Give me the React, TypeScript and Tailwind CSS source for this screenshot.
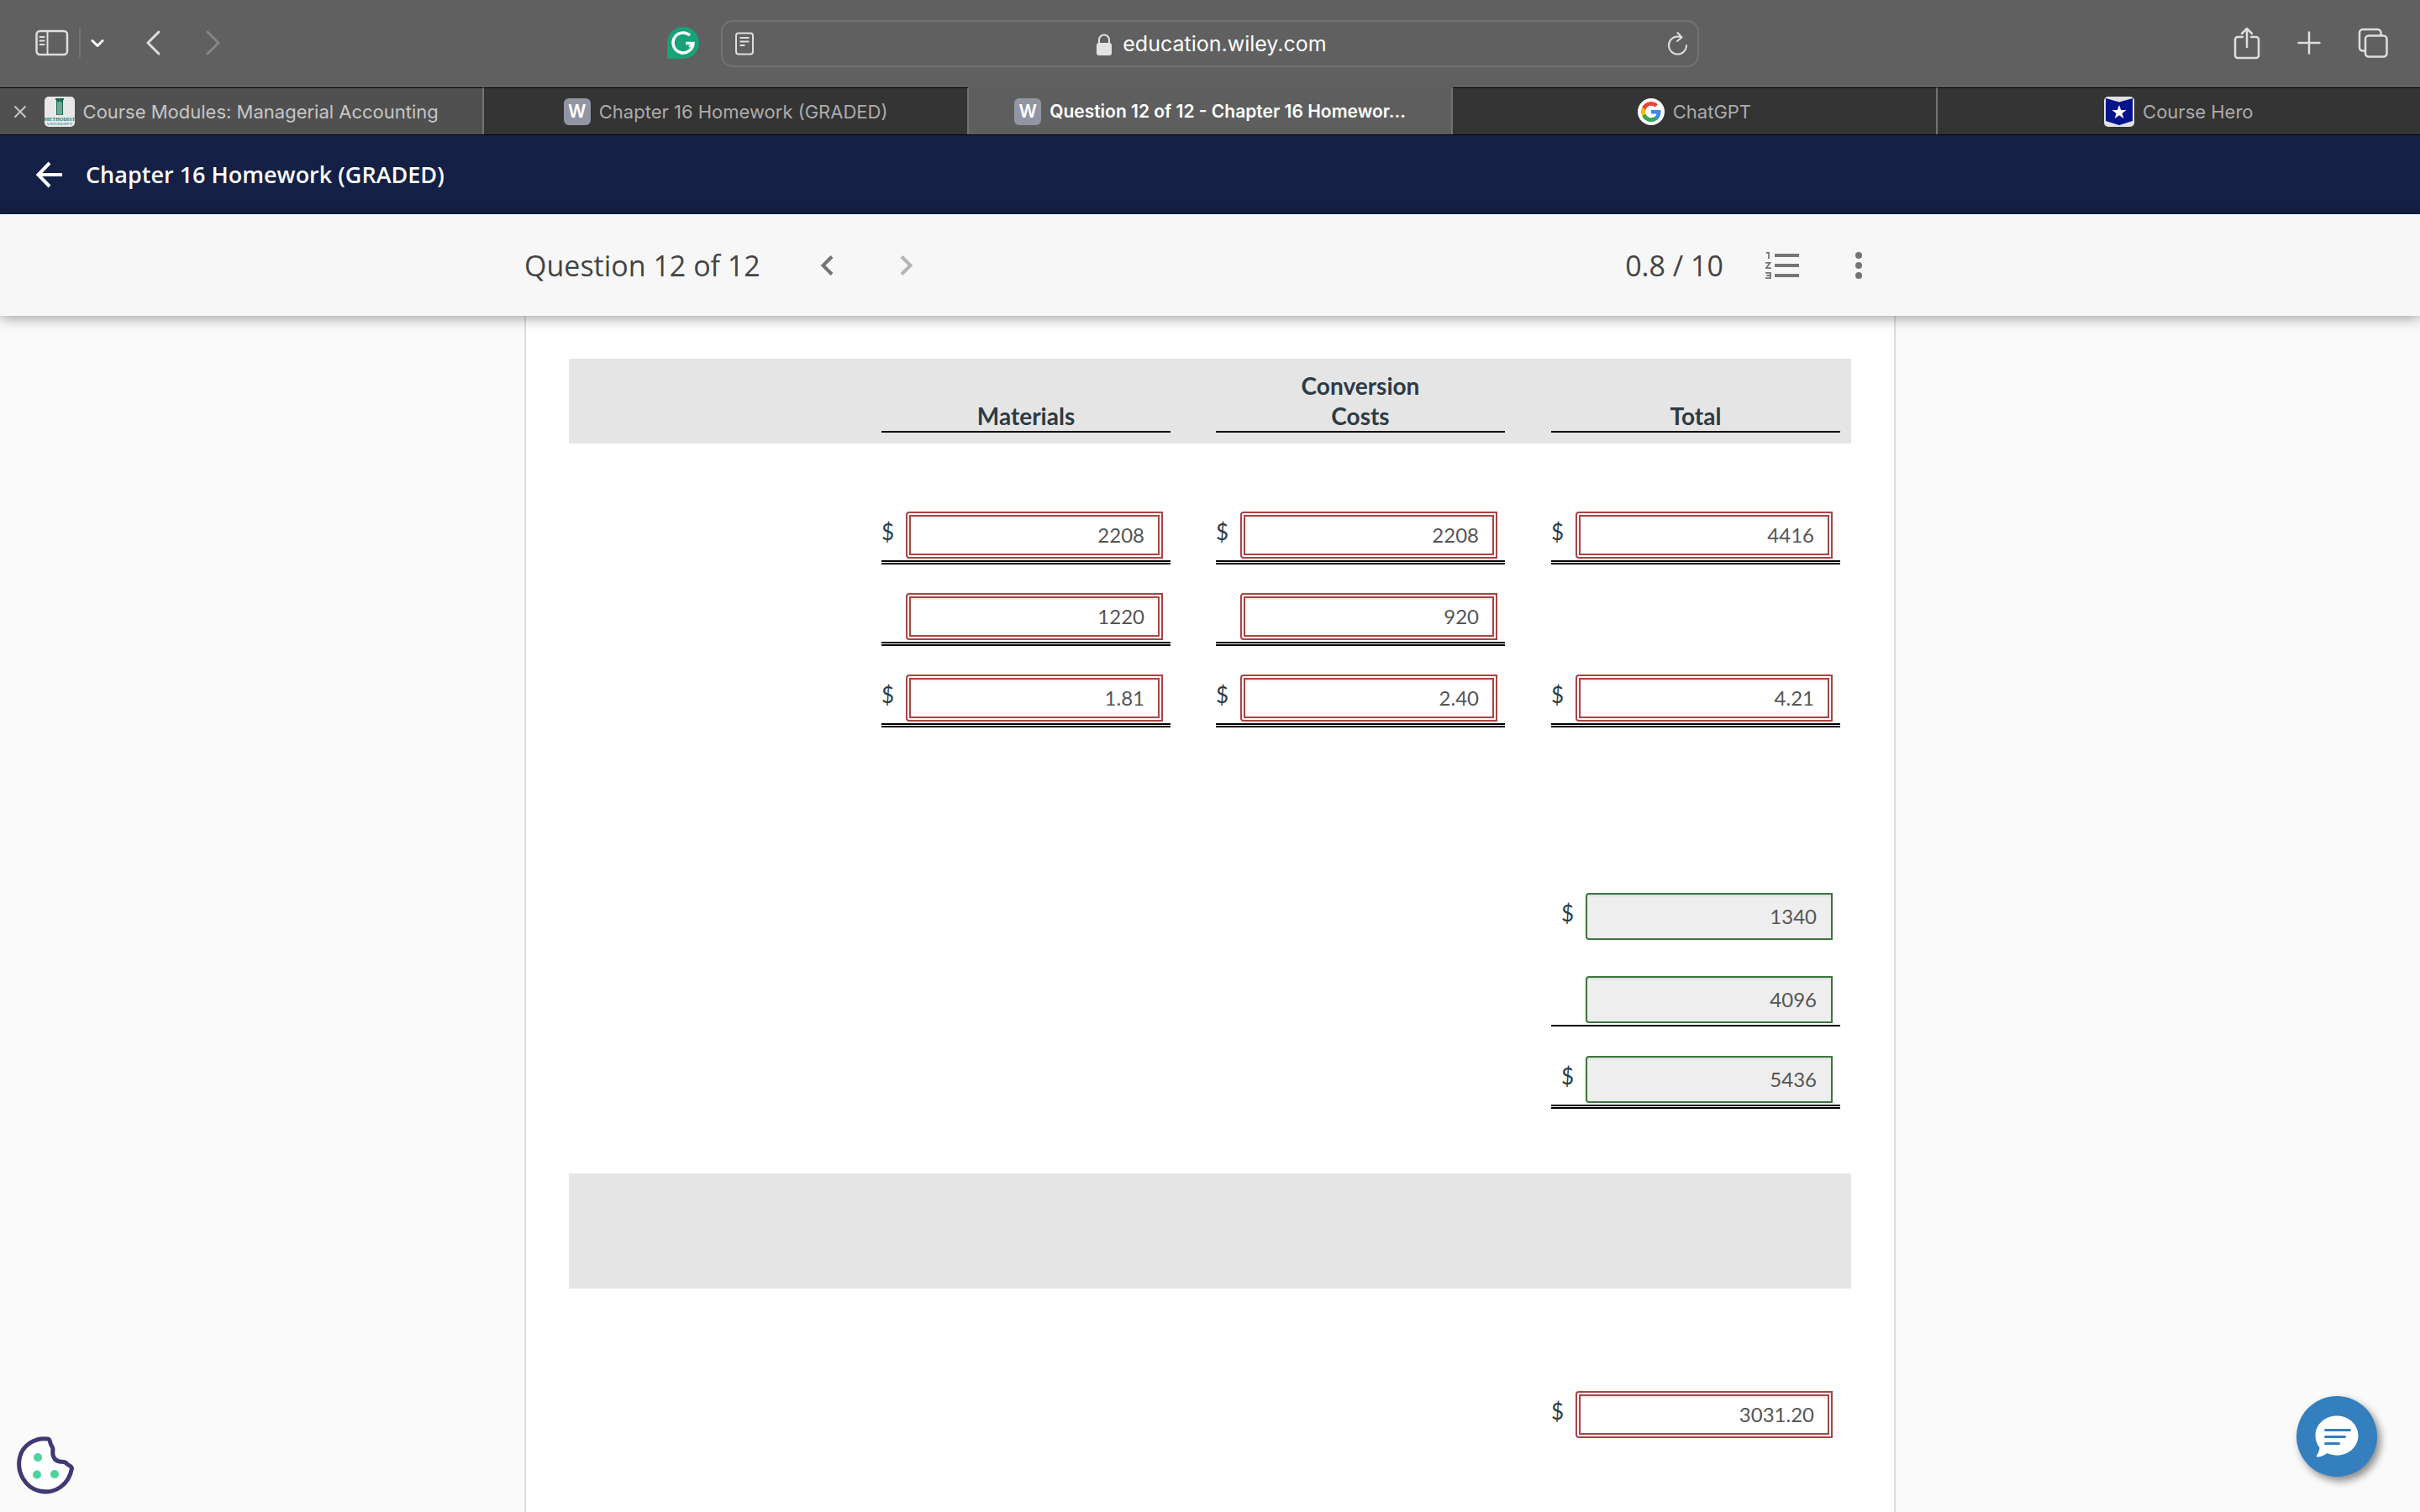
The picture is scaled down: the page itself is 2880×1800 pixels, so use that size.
import type { ReactNode } from "react";

type TabProps = {
  title: string;
  icon: ReactNode;
  active?: boolean;
  hovered?: boolean;
  last?: boolean;
};

type AnswerProps = {
  label: string;
  value: string;
  correct?: boolean;
  dollar?: boolean;
  line?: "single" | "double" | "none";
};

function WileyIcon() {
  return (
    <span className="flex size-8 items-center justify-center rounded-md bg-[#9295a3] text-[21px] font-semibold text-white">
      W
    </span>
  );
}

function MethodistIcon() {
  return (
    <svg className="size-9" viewBox="0 0 36 36">
      <rect width="36" height="36" rx="5" fill="#e8e8e8" />
      <path d="M13 2h10v2h-1v18h-8V4h-1z" fill="#17694f" />
      <path d="M16 6.500v15M18 5.500v16M20 6.500v15" stroke="#cfe0d9" strokeWidth="1" />
      <text x="18" y="29" textAnchor="middle" fontFamily="Liberation Serif, serif" fontWeight="700" fontSize="6" fill="#2b7a60">
        METHODIST
      </text>
      <text x="18" y="34" textAnchor="middle" fontFamily="Liberation Serif, serif" fontSize="5" fill="#2b7a60">
        UNIVERSITY
      </text>
    </svg>
  );
}

function GoogleIcon() {
  return (
    <svg className="size-8" viewBox="0 0 32 32">
      <circle cx="16" cy="16" r="16" fill="#fff" />
      <g transform="translate(4 4)">
        <path fill="#4285f4" d="M23.500 12.300c0-.8-.1-1.600-.2-2.300H12v4.500h6.500a5.500 5.500 0 0 1-2.400 3.600v3h3.900c2.200-2.100 3.500-5.200 3.500-8.800z" />
        <path fill="#34a853" d="M12 24c3.200 0 6-1.100 8-2.900l-3.900-3c-1.100.7-2.500 1.200-4.100 1.200-3.100 0-5.800-2.100-6.700-5H1.300v3.100A12 12 0 0 0 12 24z" />
        <path fill="#fbbc05" d="M5.300 14.300a7.200 7.200 0 0 1 0-4.600V6.600h-4a12 12 0 0 0 0 10.800z" />
        <path fill="#ea4335" d="M12 4.800c1.800 0 3.300.6 4.600 1.800L20 3.200A12 12 0 0 0 1.300 6.600l4 3.100c.9-2.800 3.600-4.900 6.700-4.900z" />
      </g>
    </svg>
  );
}

function CourseHeroIcon() {
  return (
    <svg className="size-9" viewBox="0 0 36 36">
      <rect width="36" height="36" rx="5" fill="#e2e2e2" />
      <path d="M2 2l16 4.500L34 2v27l-16 5L2 29z" fill="#03148c" />
      <path d="M18 10l2.200 6h6.300l-5 3.900 1.900 6.100-5.400-3.700-5.400 3.700 1.900-6.100-5-3.900h6.300z" fill="#fff" />
    </svg>
  );
}

function Tab({ title, icon, active, hovered, last }: TabProps) {
  const bg = active
    ? "border-t-[#5e5e5e] bg-[#5e5e5e] text-white"
    : hovered
      ? "border-t-black bg-[#505050] text-[#c6c6c6]"
      : "border-t-black bg-[#343434] text-[#acacac]";

  return (
    <div className={`relative flex min-w-0 flex-1 border-t ${bg} ${last ? "" : "border-r-2 border-r-[#727272]"}`}>
      {hovered && (
        <button type="button" aria-label="Close tab" className="absolute inset-y-0 left-4">
          <svg className="size-4" viewBox="0 0 16 16" fill="none" stroke="#c6c6c6" strokeWidth="2" strokeLinecap="round">
            <path d="M2 2l12 12M14 2L2 14" />
          </svg>
        </button>
      )}
      <a href="#" className="flex min-w-0 flex-1 items-center justify-center gap-[10px] pt-px">
        {icon}
        <span className={`truncate ${active ? "text-[21px] font-semibold" : "text-[22px]"}`}>{title}</span>
      </a>
    </div>
  );
}

function Toolbar() {
  return (
    <div className="grid h-[104px] grid-cols-[1fr_minmax(0,1164px)_1fr] items-center bg-[#606060]">
      <div className="flex items-center pr-[26px] pb-[2px] pl-[42px]">
        <button type="button" aria-label="Show sidebar">
          <svg className="h-8 w-10" viewBox="0 0 40 32" fill="none" stroke="#dedede" strokeWidth="2.500">
            <rect x="1.500" y="2" width="36.500" height="28" rx="4" />
            <path d="M14.500 2v28" strokeWidth="2" />
            <path d="M5.500 9h5M5.500 13.500h5M5.500 18h5" strokeWidth="2" strokeLinecap="round" />
          </svg>
        </button>
        <span className="ml-3 h-9 w-[2px] bg-[#727272]" />
        <button type="button" aria-label="Tab groups" className="ml-3">
          <svg className="size-4" viewBox="0 0 16 16" fill="none" stroke="#fff" strokeWidth="3" strokeLinecap="round" strokeLinejoin="round">
            <path d="M2 5.500l6 6 6-6" />
          </svg>
        </button>
        <button type="button" aria-label="Back" className="ml-12">
          <svg className="h-8 w-5" viewBox="0 0 20 32" fill="none" stroke="#dedede" strokeWidth="3" strokeLinecap="round" strokeLinejoin="round">
            <path d="M17 3L4 16l13 13" />
          </svg>
        </button>
        <button type="button" aria-label="Forward" className="ml-[52px]">
          <svg className="h-8 w-5" viewBox="0 0 20 32" fill="none" stroke="#868686" strokeWidth="3" strokeLinecap="round" strokeLinejoin="round">
            <path d="M3 3l13 13L3 29" />
          </svg>
        </button>
        <button type="button" aria-label="Grammarly" className="ml-auto">
          <svg className="size-[38px]" viewBox="0 0 38 38" fill="none">
            <path d="M19 0a19 19 0 1 1 0 38H0V19A19 19 0 0 1 19 0z" fill="#15a377" />
            <path d="M27 10A12 12 0 1 0 31 19.500h-9" stroke="#fff" strokeWidth="3.500" />
            <path d="M26 24l5-4.500" stroke="#fff" strokeWidth="2" />
          </svg>
        </button>
      </div>

      <div className="flex h-14 items-center justify-between rounded-[14px] border-2 border-[#727272] pr-[11px] pl-[14px]">
        <button type="button" aria-label="Reader">
          <svg className="h-7 w-6" viewBox="0 0 24 28" fill="none" stroke="#dedede" strokeWidth="2">
            <rect x="2" y="1.500" width="20" height="25" rx="3" />
            <path d="M6.500 7h11M6.500 11.500h11M6.500 16h6" />
          </svg>
        </button>
        <div className="flex items-center gap-3 pt-[2px]">
          <svg className="h-[26px] w-5" viewBox="0 0 20 26" fill="none">
            <rect x="1" y="11" width="18" height="15" rx="3" fill="#e3e3e3" />
            <path d="M4 12V7.500a6 6 0 0 1 12 0V12" stroke="#e3e3e3" strokeWidth="2" />
          </svg>
          <input
            aria-label="Address"
            className="field-sizing-content bg-transparent text-[25px] text-white outline-none"
            defaultValue="education.wiley.com"
          />
        </div>
        <button type="button" aria-label="Reload">
          <svg className="h-7 w-6" viewBox="0 0 24 28" fill="none" stroke="#dedede" strokeWidth="2" strokeLinecap="round" strokeLinejoin="round">
            <path d="M22 16a10.500 10.500 0 1 1-10.500-10.500c1.500 0 3 .2 4.500 1" />
            <path d="M11.500 1l5 5.500-5.500 4.500" />
          </svg>
        </button>
      </div>

      <div className="flex items-center justify-end gap-11 pr-[38px] pb-[3px]">
        <button type="button" aria-label="Share">
          <svg className="h-10 w-8" viewBox="0 0 32 40" fill="none" stroke="#dedede" strokeWidth="2.500" strokeLinecap="round" strokeLinejoin="round">
            <path d="M11 13H5a3 3 0 0 0-3 3v19a3 3 0 0 0 3 3h22a3 3 0 0 0 3-3V16a3 3 0 0 0-3-3h-6" />
            <path d="M16 25V3M10 9l6-6 6 6" />
          </svg>
        </button>
        <button type="button" aria-label="New tab">
          <svg className="size-7" viewBox="0 0 28 28" fill="none" stroke="#dedede" strokeWidth="2.500" strokeLinecap="round">
            <path d="M14 1.500v25M1.500 14h25" />
          </svg>
        </button>
        <button type="button" aria-label="Tab overview">
          <svg className="size-9" viewBox="0 0 36 36" fill="none" stroke="#dedede" strokeWidth="2.500">
            <rect x="9" y="9.500" width="25.500" height="25" rx="4" />
            <path d="M9 27.500H6a4 4 0 0 1-4-4V6a4 4 0 0 1 4-4h17.500a4 4 0 0 1 4 4v3.500" />
          </svg>
        </button>
      </div>
    </div>
  );
}

function Answer({ label, value, correct, dollar, line = "double" }: AnswerProps) {
  return (
    <div>
      <div className="flex items-center pr-[9px] pb-[2px]">
        <span className={`shrink-0 pb-2 text-[26px] leading-9 ${correct ? "w-[41px] pl-3" : "w-[29px]"}`}>
          {dollar && "$"}
        </span>
        <input
          aria-label={label}
          defaultValue={value}
          readOnly
          className={`h-14 w-full min-w-0 rounded-l-[4px] pb-[2px] text-right text-2xl text-[#555] shadow-[inset_0_2px_2px_rgba(0,0,0,0.075)] outline-none ${
            correct ? "border-2 border-[#3c763d] bg-[#eee] pr-[17px]" : "border-[6px] border-double border-[#a94442] bg-white pr-4"
          }`}
        />
      </div>
      {line === "single" && <div className="h-[2px] bg-black" />}
      {line === "double" && <div className="h-[5px] border-y-2 border-black" />}
    </div>
  );
}

function Spacer({ className }: { className: string }) {
  return (
    <tr className={className}>
      <td colSpan={4} />
    </tr>
  );
}

function CostTable() {
  return (
    <table className="w-full table-fixed font-[Lato,sans-serif] text-[#2d3b45]">
      <colgroup>
        <col />
        <col className="w-[398px]" />
        <col className="w-[399px]" />
        <col className="w-[357px]" />
      </colgroup>
      <thead className="bg-[#e5e5e5] text-[28px] leading-9 font-bold">
        <tr className="align-bottom">
          <td />
          <th className="pt-[14px] pr-[54px] pb-[13px]">
            <div className="border-b-2 border-black">Materials</div>
          </th>
          <th className="pt-[14px] pr-[55px] pb-[13px]">
            <div className="border-b-2 border-black">
              Conversion
              <br />
              Costs
            </div>
          </th>
          <th className="pt-[14px] pr-[13px] pb-[13px]">
            <div className="border-b-2 border-black">Total</div>
          </th>
        </tr>
      </thead>
      <tbody className="align-bottom">
        <Spacer className="h-[47px]" />
        <tr className="h-[97px]">
          <td />
          <td className="pr-[54px]">
            <Answer label="Materials units" value="2208" dollar />
          </td>
          <td className="pr-[55px]">
            <Answer label="Conversion units" value="2208" dollar />
          </td>
          <td className="pr-[13px]">
            <Answer label="Total units" value="4416" dollar />
          </td>
        </tr>
        <tr className="h-[97px]">
          <td />
          <td className="pr-[54px]">
            <Answer label="Equivalent units, materials" value="1220" />
          </td>
          <td className="pr-[55px]">
            <Answer label="Equivalent units, conversion" value="920" />
          </td>
          <td />
        </tr>
        <tr className="h-[97px]">
          <td />
          <td className="pr-[54px]">
            <Answer label="Unit cost, materials" value="1.81" dollar />
          </td>
          <td className="pr-[55px]">
            <Answer label="Unit cost, conversion" value="2.40" dollar />
          </td>
          <td className="pr-[13px]">
            <Answer label="Unit cost, total" value="4.21" dollar />
          </td>
        </tr>
        <Spacer className="h-[158px]" />
        <tr className="h-[97px]">
          <td colSpan={3} />
          <td className="pr-[13px]">
            <Answer label="Beginning costs" value="1340" correct dollar line="none" />
          </td>
        </tr>
        <tr className="h-[101px]">
          <td colSpan={3} />
          <td className="pr-[13px]">
            <Answer label="Costs added" value="4096" correct line="single" />
          </td>
        </tr>
        <tr className="h-[98px]">
          <td colSpan={3} />
          <td className="pr-[13px]">
            <Answer label="Total costs" value="5436" correct dollar />
          </td>
        </tr>
        <Spacer className="h-[77px]" />
        <Spacer className="h-[137px] bg-[#e5e5e5]" />
        <Spacer className="h-[83px]" />
        <tr className="h-[97px]">
          <td colSpan={3} />
          <td className="pr-[13px]">
            <Answer label="Costs transferred out" value="3031.20" dollar line="none" />
          </td>
        </tr>
      </tbody>
    </table>
  );
}

export default function App() {
  return (
    <div className="flex h-screen flex-col overflow-hidden bg-[#fafafa] font-['Open_Sans',sans-serif]">
      <header className="font-[Inter,sans-serif]">
        <Toolbar />
        <nav className="flex h-[57px] border-b border-black">
          <Tab title="Course Modules: Managerial Accounting" icon={<MethodistIcon />} hovered />
          <Tab title="Chapter 16 Homework (GRADED)" icon={<WileyIcon />} />
          <Tab title="Question 12 of 12 - Chapter 16 Homewor..." icon={<WileyIcon />} active />
          <Tab title="ChatGPT" icon={<GoogleIcon />} />
          <Tab title="Course Hero" icon={<CourseHeroIcon />} last />
        </nav>
      </header>

      <div className="flex h-[94px] shrink-0 items-center gap-7 bg-[#142045] pl-[42px] text-white">
        <button type="button" aria-label="Go back">
          <svg className="size-8" viewBox="0 0 32 32" fill="none" stroke="#fff" strokeWidth="4">
            <path d="M17 2L3.500 16 17 30M3 16h29" />
          </svg>
        </button>
        <h1 className="text-[27px] font-semibold">Chapter 16 Homework (GRADED)</h1>
      </div>

      <div className="z-10 h-[121px] shrink-0 bg-[#f7f7f7] text-[#444] shadow-[0_2px_16px_rgba(0,0,0,0.4)]">
        <div className="mx-auto flex h-full max-w-[1632px] items-center">
          <h2 className="pt-[2px] text-[34px]">Question 12 of 12</h2>
          <div className="ml-8 flex">
            <button type="button" aria-label="Previous question" className="flex w-[95px] justify-center">
              <svg className="h-6 w-4" viewBox="0 0 16 24" fill="none" stroke="#757575" strokeWidth="4">
                <path d="M14 1.500L3.500 12 14 22.500" />
              </svg>
            </button>
            <button type="button" aria-label="Next question" className="flex w-[95px] justify-center">
              <svg className="h-6 w-4" viewBox="0 0 16 24" fill="none" stroke="#b5b5b5" strokeWidth="4">
                <path d="M2 1.500L12.500 12 2 22.500" />
              </svg>
            </button>
          </div>
          <span className="ml-auto pt-[2px] text-[34px]">0.8 / 10</span>
          <button type="button" aria-label="Question list" className="ml-[50px]">
            <svg className="h-8 w-10" viewBox="0 0 40 32" fill="none" stroke="#757575">
              <path d="M11 4h29M11 16h29M11 28h29" strokeWidth="4" />
              <path d="M1 1h3v7M0 12.800h5.500L1 19.200h6M0 24.800h6v6.400H0M1.500 28H6" strokeWidth="1.800" />
            </svg>
          </button>
          <button type="button" aria-label="More options" className="mr-10 ml-[67px]">
            <svg className="h-8 w-2" viewBox="0 0 8 32" fill="#757575">
              <circle cx="4" cy="4" r="4" />
              <circle cx="4" cy="16" r="4" />
              <circle cx="4" cy="28" r="4" />
            </svg>
          </button>
        </div>
      </div>

      <main className="mx-auto w-full max-w-[1632px] flex-1 border-x-2 border-[#dedede] bg-white px-[51px] pt-[51px]">
        <CostTable />
      </main>

      <button type="button" aria-label="Cookie settings" className="fixed bottom-5 left-5">
        <svg className="size-[70px]" viewBox="0 0 70 70" fill="none">
          <path
            d="M37 3C22 1 7 10 3.500 25C-.5 43 10 61 27 65C45 69 62 58 65.500 38C65 35 62 35 60 33C57 29 55 31 51 30C44 29 42 22 43 16C43 12 41 12 40 8C39 5 39.500 3.500 37 3Z"
            fill="#fff"
            stroke="#3f3a75"
            strokeWidth="5"
            strokeLinejoin="round"
          />
          <circle cx="25" cy="25" r="5" fill="#4bd49c" />
          <circle cx="24" cy="45.500" r="5" fill="#4bd49c" />
          <circle cx="45" cy="45" r="5" fill="#4bd49c" />
        </svg>
      </button>

      <button
        type="button"
        aria-label="Open chat"
        className="fixed right-[51px] bottom-[42px] flex size-24 items-center justify-center rounded-full bg-[#347fbd] shadow-[4px_5px_10px_rgba(0,0,0,0.45)]"
      >
        <svg className="size-[52px]" viewBox="0 0 52 52" fill="none">
          <path d="M26 1.500c14.200 0 25.500 10.500 25.500 23.500S40.200 48.500 26 48.500c-4.200 0-8-.9-11.500-2.500C11 48.500 7 50.500 2.500 50.500c-.8 0-1-.9-.6-1.500C4 46 5 43 5.500 39.500C2.300 35.500.5 30.500.5 25 .5 12 11.800 1.500 26 1.500z" fill="#fff" />
          <path d="M12.500 18.500h29M12.500 26.500h23M12.500 34.500h16" stroke="#347fbd" strokeWidth="3" strokeLinecap="round" />
        </svg>
      </button>
    </div>
  );
}
